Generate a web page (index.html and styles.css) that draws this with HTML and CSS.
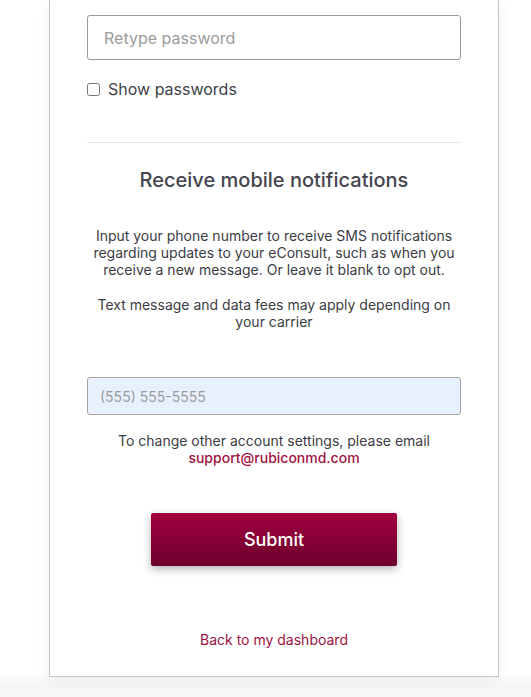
FILE: index.html
```html
<!DOCTYPE html>
<html lang="en">
<head>
  <meta charset="UTF-8">
  <meta name="viewport" content="width=device-width, initial-scale=1.0">
  <title>Account settings</title>
  <link rel="stylesheet" href="styles.css">
</head>
<body>
  <div class='page'>
    <div class='card'>
      <input class='field' type='password' placeholder='Retype password'>
      <label class='check'>
        <input type='checkbox'>
        <span>Show passwords</span>
      </label>
      <hr class='divider'>
      <h2 class='title'>Receive mobile notifications</h2>
      <p class='note'>
        Input your phone number to receive SMS notifications regarding updates to your eConsult, such as when you receive a new message. Or leave it blank to opt out.
      </p>
      <p class='note'>
        Text message and data fees may apply depending on your carrier
      </p>
      <input class='field phone' type='tel' placeholder='(555) 555-5555'>
      <p class='help'>
        To change other account settings, please email<br>
        <a class='mail' href='#'>support@rubiconmd.com</a>
      </p>
      <div class='actions'>
        <button class='submit' type='submit'>Submit</button>
      </div>
      <a class='back' href='#'>Back to my dashboard</a>
    </div>
  </div>
  <div class='footer'></div>
</body>
</html>
```

FILE: styles.css
```css
* {
  margin: 0;
  padding: 0;
  box-sizing: border-box;
}
body {
  background-color: #fff;
  font-family: Inter, "Liberation Sans", sans-serif;
  color: #3a3a44;
}
.page {
  padding-left: 49px;
}
.card {
  width: 450px;
  background-color: #fff;
  border: 1px solid #c6c2d2;
  border-top: none;
  padding: 15px 37px 27px;
  box-shadow: 0 4px 14px rgba(0, 0, 0, 0.06);
  position: relative;
  z-index: 1;
}
.field {
  display: block;
  width: 100%;
  height: 45px;
  border: 1px solid #9a9a9a;
  border-radius: 3px;
  padding: 0 16px;
  font-family: inherit;
  font-size: 16px;
  color: #333;
}
.field::placeholder {
  color: #9b9b9b;
}
.check {
  display: flex;
  align-items: center;
  gap: 8px;
  margin-top: 19px;
  font-size: 16px;
  color: #404048;
}
.check input {
  width: 13px;
  height: 13px;
  margin: 1px 0 0 0;
}
.divider {
  border: none;
  border-top: 1px solid #e6e6e6;
  margin-top: 43px;
}
.title {
  margin-top: 25px;
  font-size: 20px;
  font-weight: 500;
  line-height: 24px;
  text-align: center;
  color: #45454f;
}
.note {
  margin-top: 35px;
  padding: 0 2px;
  font-size: 14px;
  line-height: 17px;
  text-align: center;
  color: #3c3c44;
}
.note + .note {
  margin-top: 18px;
}
.phone {
  margin-top: 47px;
  height: 38px;
  padding: 0 12px;
  font-size: 14px;
  background-color: #e8f0fe;
  border-color: #a3a3a3;
}
.help {
  margin-top: 17px;
  font-size: 14px;
  line-height: 17px;
  text-align: center;
  color: #3c3c44;
}
.mail {
  color: #a3113f;
  font-weight: 500;
  text-decoration: none;
}
.actions {
  display: flex;
  justify-content: center;
  margin-top: 47px;
}
.submit {
  width: 246px;
  height: 53px;
  border: none;
  border-radius: 2px;
  background: linear-gradient(#a1003f, #6c002c);
  color: #fff;
  font-family: inherit;
  font-size: 18px;
  font-weight: 500;
  box-shadow: 0 3px 8px rgba(0, 0, 0, 0.3);
}
.back {
  display: block;
  margin-top: 65px;
  font-size: 14px;
  line-height: 18px;
  text-align: center;
  color: #9b1340;
  text-decoration: none;
}
.footer {
  height: 30px;
  margin-top: -6px;
  background: linear-gradient(#fff, #f6f6f6 50%);
}
```
